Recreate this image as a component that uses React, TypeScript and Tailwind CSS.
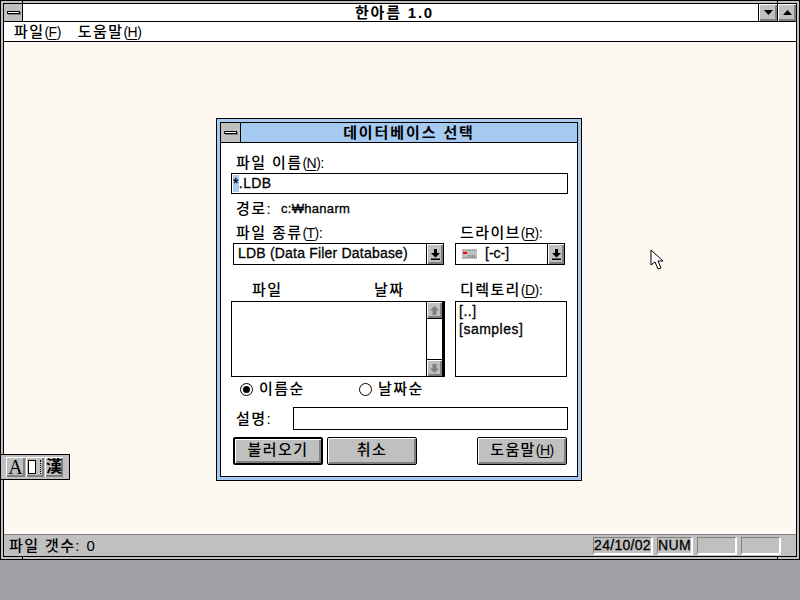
import type { ReactNode } from 'react';

const bevel = 'bg-[#c0c0c0] shadow-[inset_1px_1px_0_#fff,inset_-2px_-2px_0_#808080]';
const heavy = '[-webkit-text-stroke:0.3px_#000]';

function Key({ children }: { children: string }) {
  return (
    <span className="text-[14px] tracking-[-0.5px]">
      (<span className="underline underline-offset-2">{children}</span>)
    </span>
  );
}

function Ko({ children, className = '' }: { children: ReactNode; className?: string }) {
  return <span className={`block text-[15px] leading-5 font-medium tracking-[1.4px] whitespace-nowrap text-black ${className}`}>{children}</span>;
}

function SysBox({ className }: { className: string }) {
  return (
    <div className={`flex shrink-0 items-center justify-center bg-[#c0c0c0] ${className}`}>
      <div className="h-[3px] w-[13px] border border-black bg-white shadow-[1px_1px_0_#808080]" />
    </div>
  );
}

function ComboArrow() {
  return (
    <div className={`flex h-[20px] w-[17px] shrink-0 items-center justify-center border-l border-black ${bevel}`}>
      <svg width="9" height="11" viewBox="0 0 9 11">
        <path d="M3 0h3v4h3L4.500 8.500 0 4h3zM0 9.500h9V11H0z" fill="#000" />
      </svg>
    </div>
  );
}

function ScrollButton({ up, className }: { up?: boolean; className: string }) {
  return (
    <div className={`flex h-[17px] items-center justify-center ${bevel} ${className}`}>
      <svg width="9" height="9" viewBox="0 0 9 9" className={up ? '' : 'rotate-180'}>
        <path d="M4.500 0 9 4.500H6.500V9h-4V4.500H0z" fill="#808080" />
      </svg>
    </div>
  );
}

function Radio({ checked }: { checked?: boolean }) {
  return (
    <div className="flex h-[13px] w-[13px] shrink-0 items-center justify-center rounded-full border border-black bg-white">
      {checked && <div className="h-[7px] w-[7px] rounded-full bg-black" />}
    </div>
  );
}

function Button({ children, primary, className = '' }: { children: ReactNode; primary?: boolean; className?: string }) {
  return (
    <div
      className={`flex h-[28px] w-[90px] items-center justify-center rounded-[2px] border-black ${primary ? 'border-2' : 'border'} ${bevel} ${className}`}
    >
      <Ko className="-mt-[2px]">{children}</Ko>
    </div>
  );
}

function StatusCell({ children, className }: { children?: string; className: string }) {
  return (
    <div
      className={`flex h-[18px] items-center justify-center border-t border-l border-[#808080] border-r-2 border-b-2 border-r-white border-b-white text-[14px] tracking-[0.3px] text-black ${heavy} ${className}`}
    >
      {children}
    </div>
  );
}

function Dialog() {
  return (
    <div className="absolute top-[76px] left-[212px] flex h-[363px] w-[366px] flex-col border border-black bg-[#a6caf0] p-[3px]">
      <div className="flex h-full flex-col border border-black bg-white">
        <div className="flex h-[20px] shrink-0 border-b border-black bg-[#a6caf0]">
          <SysBox className="h-[19px] w-[20px] border-r border-black" />
          <div className="flex-1 text-center text-[15px] leading-[19px] font-bold tracking-[1.9px] text-black">데이터베이스 선택</div>
        </div>

        <div className="mt-[10px] flex h-[20px] pl-[15px]">
          <Ko>파일 이름<Key>N</Key>:</Ko>
        </div>
        <div className={`ml-[10px] flex h-[21px] w-[337px] items-center border border-black pl-[1px] text-[14px] tracking-[0.4px] text-black ${heavy}`}>
          <span className="bg-[#a6caf0] leading-[17px]">*</span>.LDB
        </div>

        <div className="mt-[5px] flex h-[20px] items-center pl-[15px]">
          <Ko className="w-[45px]">경로:</Ko>
          <span className={`text-[13px] tracking-[0.3px] text-black ${heavy}`}>c:₩hanarm</span>
        </div>

        <div className="mt-[4px] flex h-[20px]">
          <div className="w-[239px] pl-[15px]">
            <Ko>파일 종류<Key>T</Key>:</Ko>
          </div>
          <Ko>드라이브<Key>R</Key>:</Ko>
        </div>

        <div className="flex h-[22px]">
          <div className="ml-[12px] flex w-[211px] items-center justify-between border border-black">
            <span className={`-mt-[2px] pl-[4px] text-[14px] tracking-[0.2px] whitespace-nowrap text-black ${heavy}`}>LDB (Data Filer Database)</span>
            <ComboArrow />
          </div>
          <div className="ml-[11px] flex w-[110px] items-center border border-black">
            <svg width="16" height="10" viewBox="0 0 16 10" className="ml-[6px] shrink-0">
              <path d="M0 1h15v8H0z" fill="#c0c0c0" />
              <path d="M0 1h15M0 9h15" stroke="#808080" />
              <path d="M1 3h4v2H1z" fill="#f00" />
              <path d="M6 7h8" stroke="#404040" strokeDasharray="1 1" />
            </svg>
            <span className={`-mt-[2px] ml-[7px] flex-1 text-[14px] text-black ${heavy}`}>[-c-]</span>
            <ComboArrow />
          </div>
        </div>

        <div className="mt-[15px] flex h-[21px]">
          <Ko className="ml-[31px] w-[122px]">파일</Ko>
          <Ko className="w-[86px]">날짜</Ko>
          <Ko>디렉토리<Key>D</Key>:</Ko>
        </div>

        <div className="flex h-[76px]">
          <div className="ml-[10px] flex w-[214px] border border-black">
            <div className="flex-1" />
            <div className="flex w-[18px] flex-col justify-between border-x border-r-2 border-black">
              <ScrollButton up className="border-b border-black" />
              <ScrollButton className="border-t border-black" />
            </div>
          </div>
          <div className={`ml-[10px] w-[112px] border border-black pl-[3px] text-[14px] leading-[18px] tracking-[0.5px] text-black ${heavy}`}>
            <div>[..]</div>
            <div>[samples]</div>
          </div>
        </div>

        <div className="mt-[2px] flex h-[20px] items-center pl-[19px]">
          <Radio checked />
          <Ko className="ml-[6px] w-[100px]">이름순</Ko>
          <Radio />
          <Ko className="ml-[6px]">날짜순</Ko>
        </div>

        <div className="mt-[8px] flex h-[23px] items-center pl-[15px]">
          <Ko className="w-[57px]">설명:</Ko>
          <div className="h-full w-[275px] border border-black" />
        </div>

        <div className="mt-[7px] flex">
          <Button primary className="ml-[12px]">불러오기</Button>
          <Button className="ml-[4px]">취소</Button>
          <Button className="ml-[60px]">도움말<Key>H</Key></Button>
        </div>
      </div>
    </div>
  );
}

function ImeBar() {
  return (
    <div className="absolute top-[412px] left-[-4px] flex h-[26px] w-[70px] items-center gap-[1px] border border-black bg-[#c0c0c0] pl-[5px]">
      <div className={`flex h-[20px] w-[19px] items-center justify-center text-[20px] text-black font-['Liberation_Serif',serif] ${bevel}`}>A</div>
      <div className={`flex h-[20px] w-[18px] items-center pl-[2px] ${bevel}`}>
        <div className="h-[14px] w-[8px] border border-black bg-white" />
        <div className="h-[14px] w-[5px] border-r border-dotted border-black" />
      </div>
      <div className={`flex h-[20px] w-[18px] items-center justify-center text-[16px] font-bold text-black ${bevel}`}>漢</div>
    </div>
  );
}

export default function App() {
  return (
    <div className="relative h-[600px] w-[800px] overflow-hidden bg-[#a0a0a4] font-['Liberation_Sans','Noto_Sans_CJK_KR',sans-serif]">
      <div className="relative h-[560px] w-[800px] border border-black bg-[#c0c0c0] p-[2px]">
        <div className="absolute top-0 left-[21px] h-[2px] w-px bg-black" />
        <div className="absolute top-0 left-[776px] h-[2px] w-px bg-black" />
        <div className="absolute bottom-0 left-[21px] h-[2px] w-px bg-black" />
        <div className="absolute bottom-0 left-[776px] h-[2px] w-px bg-black" />

        <div className="flex h-full flex-col border border-black bg-white">
          <div className="flex h-[18px] shrink-0 border-b border-black">
            <SysBox className="h-[17px] w-[19px] border-r border-black" />
            <div className="flex-1 pl-[8px] text-center text-[15px] leading-[17px] font-bold tracking-[1.8px] text-black">한아름 1.0</div>
            <div className={`flex h-[17px] w-[19px] items-center justify-center border-l border-black ${bevel}`}>
              <svg width="9" height="5" viewBox="0 0 9 5"><path d="M0 0h9L4.500 5z" fill="#000" /></svg>
            </div>
            <div className={`flex h-[17px] w-[19px] items-center justify-center border-l border-black ${bevel}`}>
              <svg width="9" height="5" viewBox="0 0 9 5"><path d="M0 5h9L4.500 0z" fill="#000" /></svg>
            </div>
          </div>

          <div className="flex h-[20px] shrink-0 items-center gap-[17px] border-b border-black pl-[10px]">
            <Ko>파일<Key>F</Key></Ko>
            <Ko>도움말<Key>H</Key></Ko>
          </div>

          <div className="relative flex-1 bg-[#fdf8f0]">
            <Dialog />
            <ImeBar />
            <svg width="15" height="22" viewBox="0 0 15 22" className="absolute top-[207px] left-[646px]">
              <path d="M1 1v15l4-3 3 7 3-1-3-7h5z" fill="#fff" stroke="#000" />
            </svg>
          </div>

          <div className="flex h-[22px] shrink-0 items-center border-t border-[#808080] bg-[#c0c0c0] pl-[5px]">
            <Ko>파일 갯수: 0</Ko>
            <div className="ml-auto flex items-center gap-[4px] pr-[15px]">
              <StatusCell className="w-[60px]">24/10/02</StatusCell>
              <StatusCell className="w-[36px]">NUM</StatusCell>
              <StatusCell className="w-[40px]" />
              <StatusCell className="w-[40px]" />
            </div>
          </div>
        </div>
      </div>
    </div>
  );
}
